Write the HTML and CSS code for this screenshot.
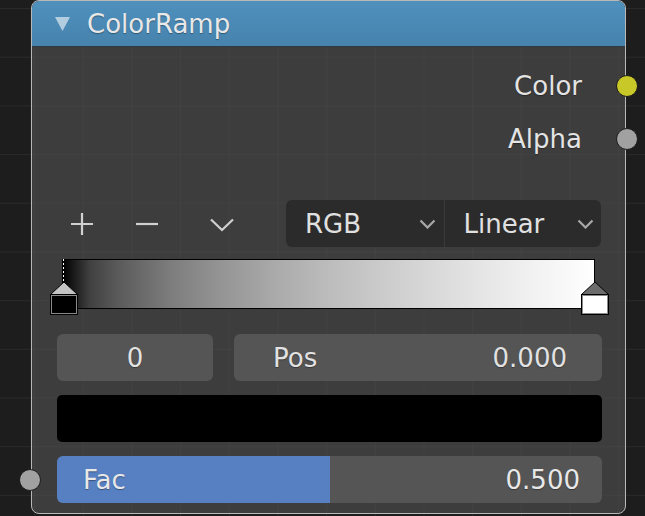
FILE: index.html
```html
<!DOCTYPE html>
<html lang="en">
<head>
  <meta charset="UTF-8">
  <meta name="viewport" content="width=device-width, initial-scale=1.0">
  <title>ColorRamp</title>
  <link rel="stylesheet" href="styles.css">
</head>
<body>

  <div class="node">
    <div class="header">
      <svg class="collapse" width="15" height="14" viewBox="0 0 15 14">
        <polygon points="0,0 15,0 7.5,14" fill="#b3cde0"/>
      </svg>
      <span class="title">ColorRamp</span>
    </div>

    <div class="content">
      <div class="output">Color<span class="socket socket-color"></span></div>
      <div class="output">Alpha<span class="socket socket-float"></span></div>

      <div class="toolbar">
        <div class="tools">
          <svg class="tool tool-add" width="24" height="24" viewBox="0 0 24 24">
            <path d="M12 1 V23 M1 12 H23" stroke="#d0d0d0" stroke-width="2.2" fill="none"/>
          </svg>
          <svg class="tool tool-remove" width="24" height="24" viewBox="0 0 24 24">
            <path d="M1 12 H23" stroke="#d0d0d0" stroke-width="2.2" fill="none"/>
          </svg>
          <svg class="tool tool-more" width="24" height="14" viewBox="0 0 24 14">
            <polyline points="1,1.5 12,12 23,1.5" stroke="#d0d0d0" stroke-width="2.2" fill="none"/>
          </svg>
        </div>
        <div class="dropdowns">
          <div class="dropdown">
            <span>RGB</span>
            <svg class="chevron" width="17" height="10" viewBox="0 0 17 10">
              <polyline points="1.5,1.5 8.5,8.5 15.5,1.5" stroke="#a8a8a8" stroke-width="2.2" fill="none"/>
            </svg>
          </div>
          <div class="dropdown">
            <span>Linear</span>
            <svg class="chevron" width="17" height="10" viewBox="0 0 17 10">
              <polyline points="1.5,1.5 8.5,8.5 15.5,1.5" stroke="#a8a8a8" stroke-width="2.2" fill="none"/>
            </svg>
          </div>
        </div>
      </div>

      <div class="ramp">
        <div class="ramp-bar"></div>
        <svg class="marker marker-start" width="28" height="56" viewBox="0 0 28 56">
          <line x1="13.5" y1="0" x2="13.5" y2="23" stroke="#000" stroke-width="1"/>
          <line x1="13.5" y1="0" x2="13.5" y2="23" stroke="#fff" stroke-width="1" stroke-dasharray="2 2"/>
          <polygon points="14,23 27.5,35.5 0.5,35.5" fill="#c4c4c4" stroke="#000" stroke-width="1"/>
          <rect x="0.5" y="35.5" width="27" height="20" fill="#000" stroke="#000" stroke-width="1"/>
          <rect x="1.5" y="36.5" width="25" height="18" fill="none" stroke="#8a8a8a" stroke-width="1"/>
        </svg>
        <svg class="marker marker-end" width="28" height="56" viewBox="0 0 28 56">
          <polygon points="14,23 27.5,35.5 0.5,35.5" fill="#6c6c6c" stroke="#000" stroke-width="1"/>
          <rect x="0.5" y="35.5" width="27" height="20" fill="#fff" stroke="#000" stroke-width="1"/>
          <rect x="1.5" y="36.5" width="25" height="18" fill="none" stroke="#8a8a8a" stroke-width="1"/>
        </svg>
      </div>

      <div class="field-row">
        <div class="field field-index">0</div>
        <div class="field field-pos"><span>Pos</span><span>0.000</span></div>
      </div>

      <div class="swatch"></div>

      <div class="slider">
        <span class="socket socket-float socket-input"></span>
        <div class="slider-fill" style="width: 50%"></div>
        <span class="slider-label">Fac</span>
        <span class="slider-value">0.500</span>
      </div>
    </div>
  </div>

</body>
</html>
```

FILE: styles.css
```css
body {
  font-family: "DejaVu Sans", Verdana, sans-serif;
  font-size: 26px;
  color: #e4e4e4;
  margin: 0;
  padding: 0;
  height: 516px;
  overflow: hidden;
  background-color: #1d1d1d;
  background-image:
    linear-gradient(to right, #2a2a2a 1px, transparent 1px),
    linear-gradient(to bottom, #2a2a2a 1px, transparent 1px);
  background-size: 48.7px 48.7px;
  background-position: 34px 8px;
}

.node {
  margin-left: 31px;
  width: 595px;
  box-sizing: border-box;
  border: 1px solid #b8b8b8;
  border-radius: 8px;
  background-color: #3d3d3d;
  background-image:
    linear-gradient(to right, rgba(255, 255, 255, 0.025) 1px, transparent 1px),
    linear-gradient(to bottom, rgba(255, 255, 255, 0.025) 1px, transparent 1px);
  background-size: 48.7px 48.7px;
  background-position: 34px 8px;
  background-attachment: fixed;
  position: relative;
}

.header {
  height: 45px;
  border-bottom: 1px solid #2e3b44;
  border-radius: 7px 7px 0 0;
  background: linear-gradient(#4f90bd, #4683ad);
  display: flex;
  align-items: center;
  padding-left: 23px;
}

.collapse {
  margin-right: 17px;
}

.title {
  color: #e8e8e8;
  text-shadow: 0 1px 1px rgba(0, 0, 0, 0.35);
}

.content {
  padding: 12px 23px 10px 25px;
}

.output {
  position: relative;
  height: 53px;
  display: flex;
  align-items: center;
  justify-content: flex-end;
  padding-right: 20px;
  text-shadow: 0 1px 1px rgba(0, 0, 0, 0.35);
}

.socket {
  position: absolute;
  top: 50%;
  right: -36px;
  width: 20px;
  height: 20px;
  margin-top: -11px;
  border: 1px solid #1c1c1c;
  border-radius: 50%;
}

.socket-color {
  background: #c8c829;
}

.socket-float {
  background: #a1a1a1;
}

.socket-input {
  right: auto;
  left: -38px;
}

.toolbar {
  margin-top: 35px;
  height: 47px;
  display: flex;
  align-items: center;
}

.tools {
  display: flex;
  align-items: center;
  padding-left: 13px;
}

.tool-remove {
  margin-left: 41px;
}

.tool-more {
  margin-left: 51px;
  margin-top: 3px;
}

.dropdowns {
  margin-left: auto;
  margin-right: 1px;
  width: 315px;
  height: 47px;
  display: flex;
  background: #2b2b2b;
  border-radius: 6px;
}

.dropdown {
  flex: 1;
  display: flex;
  align-items: center;
  justify-content: space-between;
  padding: 0 8px 0 19px;
  color: #e0e0e0;
}

.dropdown + .dropdown {
  border-left: 1px solid #3a3a3a;
  padding-right: 7px;
}

.ramp {
  position: relative;
  margin-top: 12px;
  height: 56px;
}

.ramp-bar {
  margin-left: 5px;
  width: 533px;
  height: 50px;
  box-sizing: border-box;
  border: 1px solid #000;
  background: linear-gradient(to right,
    #000 0%, #404040 5%, #595959 10%, #7c7c7c 20%, #959595 30%,
    #aaaaaa 40%, #bcbcbc 50%, #cbcbcb 60%, #d9d9d9 70%,
    #e7e7e7 80%, #f3f3f3 90%, #fff 100%);
}

.marker {
  position: absolute;
  top: 0;
}

.marker-start {
  left: -7px;
}

.marker-end {
  left: 524px;
}

.field-row {
  margin-top: 19px;
  display: flex;
  gap: 21px;
}

.field {
  height: 47px;
  background: #555;
  border-radius: 6px;
  display: flex;
  align-items: center;
  color: #e2e2e2;
  text-shadow: 0 1px 1px rgba(0, 0, 0, 0.35);
}

.field-index {
  width: 156px;
  justify-content: center;
}

.field-pos {
  flex: 1;
  justify-content: space-between;
  padding: 0 35px 0 39px;
}

.swatch {
  margin-top: 14px;
  height: 47px;
  background: #000;
  border-radius: 5px;
}

.slider {
  position: relative;
  margin-top: 14px;
  height: 47px;
  background: #555;
  border-radius: 6px;
  display: flex;
  align-items: center;
  justify-content: space-between;
  padding: 0 22px 0 26px;
  color: #e8e8e8;
  text-shadow: 0 1px 1px rgba(0, 0, 0, 0.35);
}

.slider-fill {
  position: absolute;
  left: 0;
  top: 0;
  bottom: 0;
  background: #5680c2;
  border-radius: 6px 0 0 6px;
}

.slider-label,
.slider-value {
  position: relative;
}
```
